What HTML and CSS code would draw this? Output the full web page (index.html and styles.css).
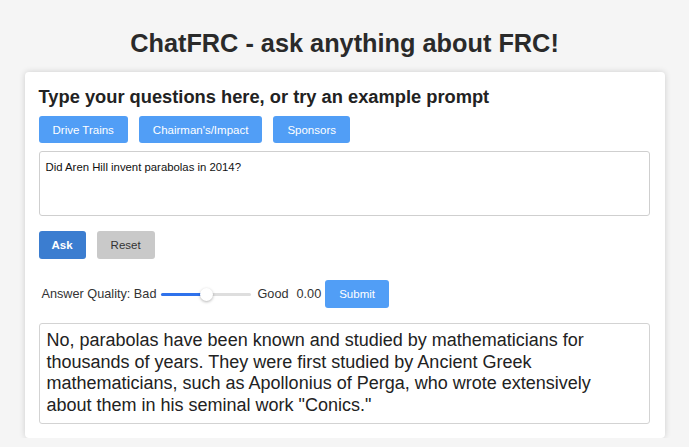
FILE: index.html
```html
<!DOCTYPE html>
<html lang="en">
<head>
<meta charset="utf-8">
<title>ChatFRC</title>
<link rel="stylesheet" href="styles.css">
</head>
<body>
<h1 class="title">ChatFRC - ask anything about FRC!</h1>
<main class="card">
  <h2 class="card-heading">Type your questions here, or try an example prompt</h2>
  <div class="examples">
    <button class="btn btn-light">Drive Trains</button>
    <button class="btn btn-light">Chairman's/Impact</button>
    <button class="btn btn-light">Sponsors</button>
  </div>
  <div class="prompt">Did Aren Hill invent parabolas in 2014?</div>
  <div class="actions">
    <button class="btn btn-ask">Ask</button>
    <button class="btn btn-reset">Reset</button>
  </div>
  <div class="quality">
    <span class="q-label">Answer Quality: Bad</span>
    <div class="slider" role="slider" aria-valuenow="0">
      <div class="slider-fill"></div>
      <div class="slider-thumb"></div>
    </div>
    <span class="q-good">Good</span>
    <span class="q-value">0.00</span>
    <button class="btn btn-light btn-submit">Submit</button>
  </div>
  <div class="answer">No, parabolas have been known and studied by mathematicians for thousands of years. They were first studied by Ancient Greek mathematicians, such as Apollonius of Perga, who wrote extensively about them in his seminal work "Conics."</div>
</main>
</body>
</html>
```

FILE: styles.css
```css
* { box-sizing: border-box; }

body {
  margin: 0;
  padding: 28px 0 0;
  background: #f5f5f5;
  font-family: "Liberation Sans", Arial, sans-serif;
  color: #222;
}

.title {
  margin: 0 0 14px;
  text-align: center;
  font-size: 25.3px;
  line-height: 30px;
  font-weight: bold;
  color: #2a2a2a;
}

.card {
  width: 640px;
  margin: 0 auto;
  background: #fff;
  border-radius: 4px;
  box-shadow: 0 0 6px rgba(0, 0, 0, 0.16);
  padding: 14px 15px 14px 14px;
  display: flex;
  flex-direction: column;
}

.card-heading {
  margin: 0 0 8px;
  font-size: 18.3px;
  line-height: 22px;
  font-weight: bold;
  color: #222;
}

.examples {
  display: flex;
  gap: 11px;
}

.btn {
  font-family: "Liberation Sans", Arial, sans-serif;
  font-size: 11.5px;
  height: 28px;
  padding: 0 14px;
  border: none;
  border-radius: 3px;
  cursor: pointer;
}

.btn-light {
  background: #519ef6;
  color: #fff;
}

.examples .btn { height: 27px; }

.prompt {
  margin-top: 8px;
  height: 65px;
  border: 1px solid #cfcfcf;
  border-radius: 3px;
  padding: 9px 6px 8px;
  font-size: 11.35px;
  line-height: 13px;
  color: #111;
}

.actions {
  margin-top: 15px;
  display: flex;
  gap: 11px;
}

.btn-ask {
  background: #3b7dd0;
  color: #fff;
  font-weight: bold;
  padding: 0 13px;
}

.btn-reset {
  background: #c9c9c9;
  color: #333;
  padding: 0 14px;
}

.quality {
  margin-top: 21px;
  display: flex;
  align-items: center;
  height: 28px;
  padding-left: 3px;
  font-size: 12.7px;
  color: #333;
}

.slider {
  position: relative;
  width: 90px;
  height: 3px;
  margin: 0 6px 0 5px;
  background: #dedede;
  border-radius: 2px;
}

.slider-fill {
  width: 45px;
  height: 3px;
  background: #2f72ec;
  border-radius: 2px;
}

.slider-thumb {
  position: absolute;
  left: 39px;
  top: -5px;
  width: 13px;
  height: 13px;
  border-radius: 50%;
  background: #fff;
  box-shadow: 0 1px 3px rgba(0, 0, 0, 0.3);
}

.q-value { margin-left: 8px; }

.btn-submit {
  margin-left: 4px;
  padding: 0 14px;
}

.answer {
  margin-top: 15px;
  border: 1px solid #d3d3d3;
  border-radius: 3px;
  padding: 6px 14px 6px 7px;
  font-size: 18px;
  line-height: 21.7px;
  color: #222;
}
```
